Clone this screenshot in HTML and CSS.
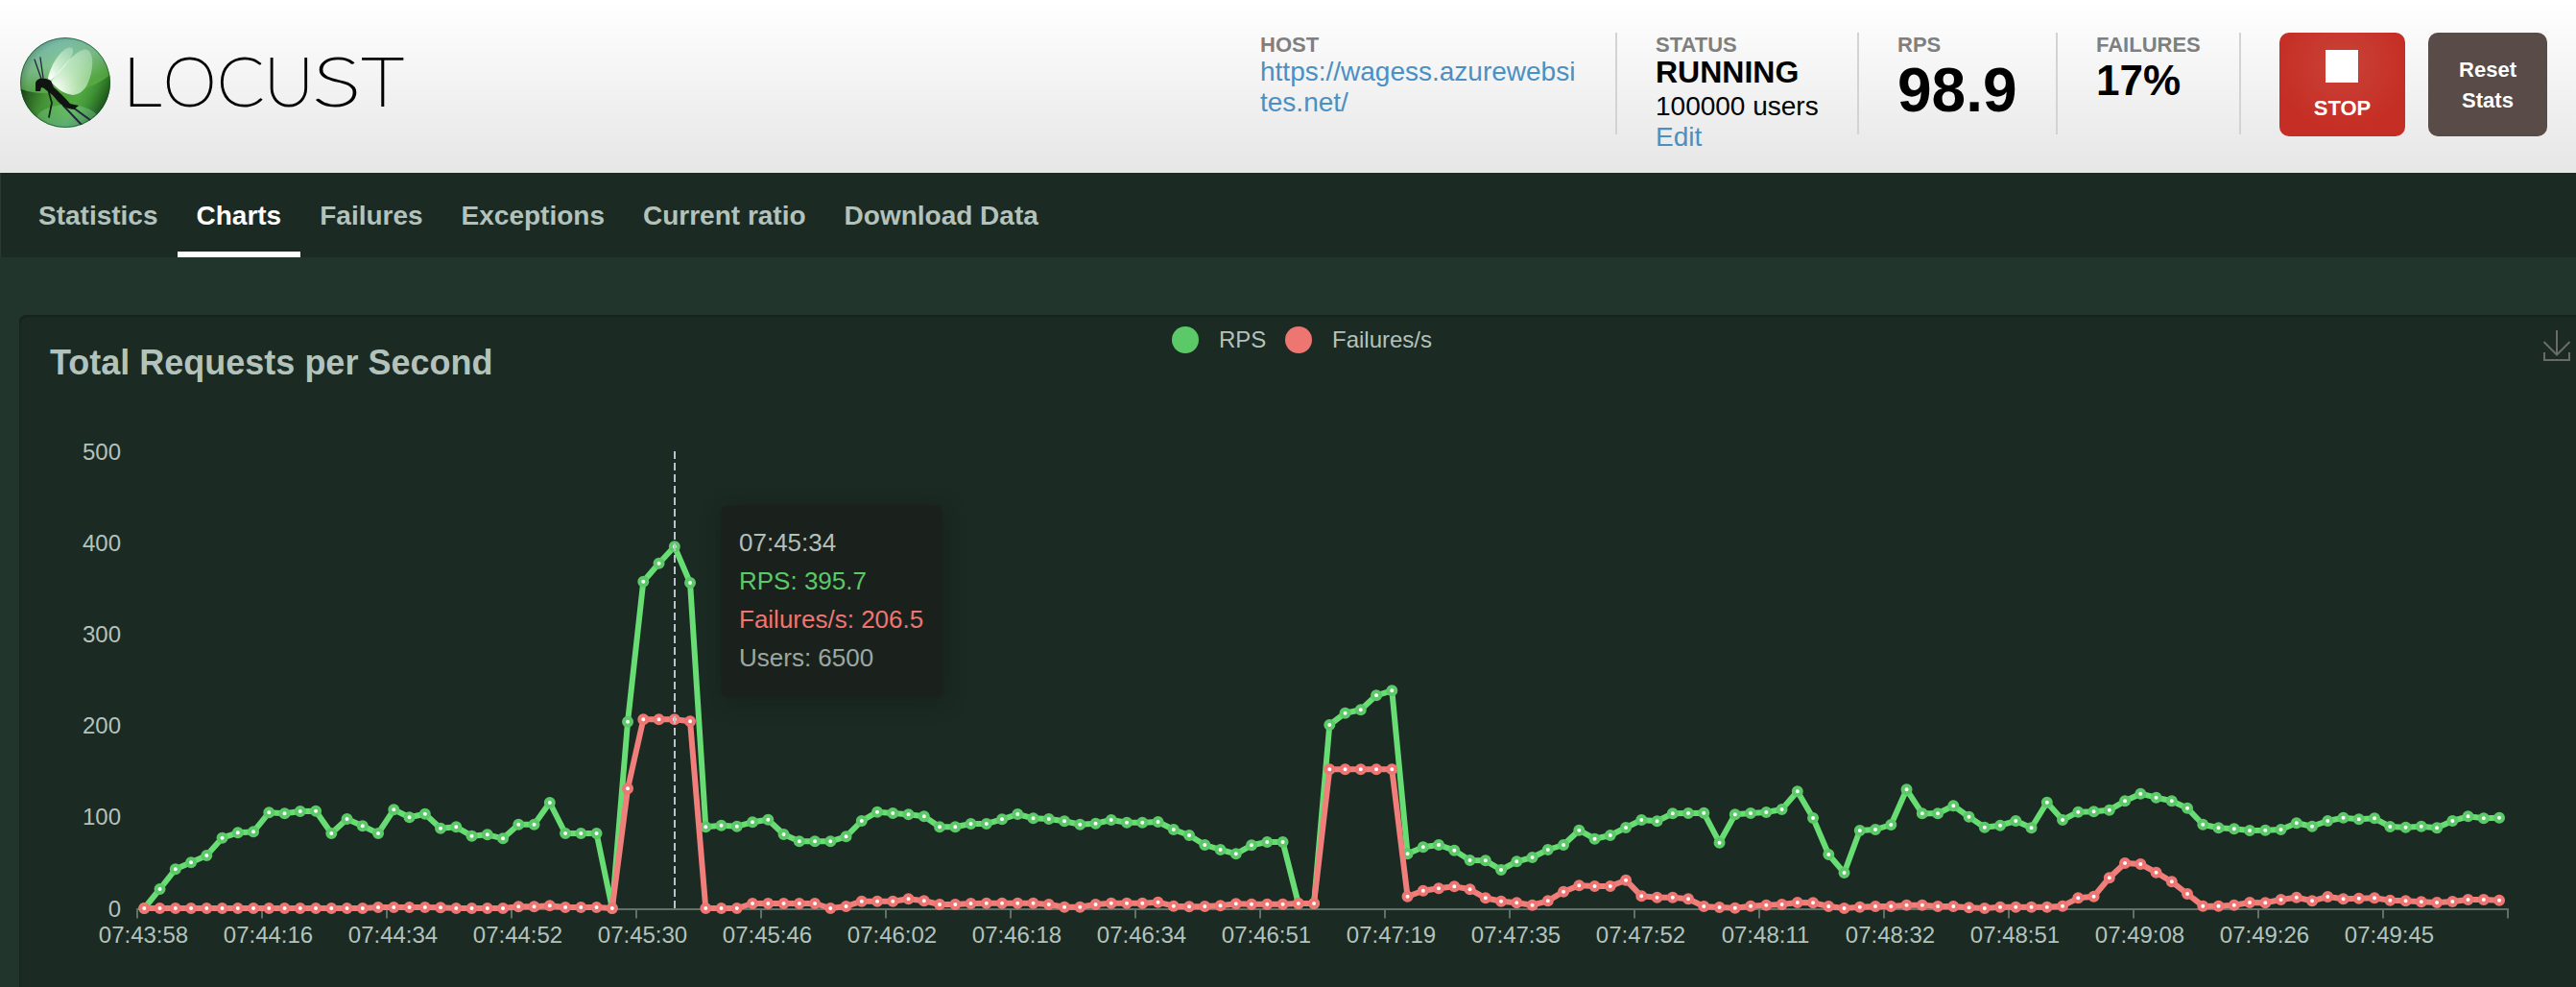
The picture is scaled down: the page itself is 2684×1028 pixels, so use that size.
FILE: index.html
```html
<!DOCTYPE html>
<html lang="en">
<head>
<meta charset="utf-8">
<title>Locust</title>
<link rel="stylesheet" href="styles.css">
</head>
<body>
<header class="top">
  <svg class="logo" width="420" height="130" viewBox="0 0 420 130" role="img" aria-label="Locust">
    <defs>
      <linearGradient id="ball" x1="0.3" y1="0" x2="0.6" y2="1">
        <stop offset="0" stop-color="#86cdc6"/><stop offset="0.3" stop-color="#82c48f"/>
        <stop offset="0.55" stop-color="#55a842"/><stop offset="0.8" stop-color="#56ae48"/><stop offset="1" stop-color="#5aaa90"/>
      </linearGradient>
      <radialGradient id="edge" cx="0.56" cy="0.52" r="0.56">
        <stop offset="0.5" stop-color="#062808" stop-opacity="0"/><stop offset="0.85" stop-color="#062808" stop-opacity="0.2"/><stop offset="1" stop-color="#062808" stop-opacity="0.6"/>
      </radialGradient>
      <linearGradient id="low" x1="0" y1="0" x2="1" y2="0.3">
        <stop offset="0" stop-color="#021404" stop-opacity="0.95"/><stop offset="0.38" stop-color="#1c5a16" stop-opacity="0.25"/>
        <stop offset="0.7" stop-color="#2a8a20" stop-opacity="0.1"/><stop offset="1" stop-color="#0b3a0a" stop-opacity="0.75"/>
      </linearGradient>
      <radialGradient id="wing" cx="0.1" cy="0.9" r="1.1">
        <stop offset="0" stop-color="#fff" stop-opacity="1"/><stop offset="0.5" stop-color="#eaffea" stop-opacity="0.65"/><stop offset="1" stop-color="#d8f5da" stop-opacity="0.4"/>
      </radialGradient>
      <clipPath id="disc"><circle cx="68" cy="86" r="47"/></clipPath>
    </defs>
    <g clip-path="url(#disc)">
      <circle cx="68" cy="86" r="47" fill="url(#ball)"/>
      <path d="M20 92Q34 98 55 97Q92 97 116 77V134H20Z" fill="url(#low)"/>
      <ellipse cx="70" cy="124" rx="32" ry="15" fill="#7fd08a" opacity="0.45"/>
      <circle cx="68" cy="86" r="47" fill="url(#edge)" opacity="0.5"/>
      <path d="M50 82C52 70 62 52 72 49.500C78 49 77 56 72 63C66 72 58 79 53 84Z" fill="url(#wing)"/>
      <path d="M53 85C62 74 76 54 88 51.500C96 51 98 64 95 76C92 90 86 98 76 99C66 98 58 91 53 85Z" fill="url(#wing)"/>
      <g fill="none" stroke="#24263c" stroke-width="1.300" stroke-linecap="round">
        <path d="M43 82L36 62M45 81L42 60"/>
        <path d="M50 93L54 107L51 122" stroke="#101c12" stroke-width="1.700"/>
        <path d="M66 110L85 130M72 109L94 125" stroke-width="2"/>
      </g>
      <path d="M37 95V86C39 81 45 80 53 84L56 91C62 96 68 102 73 108L82 110L77 114C68 113 63 109 59 104C55 98 49 95 46 92L43 91L42 95Z" fill="#101512"/>
    </g>
    <circle cx="68" cy="86" r="46.500" fill="none" stroke="#14502c" stroke-opacity="0.65"/>
    <g class="wordmark">
      <text transform="translate(127.500 110) scale(1.120 0.970)">L</text>
      <text transform="translate(170 110) scale(0.980 0.970)">O</text>
      <text transform="translate(226 110) scale(1 0.970)">C</text>
      <text transform="translate(275 110) scale(1 0.970)">U</text>
      <text transform="translate(325.500 110) scale(1.330 0.970)">S</text>
      <text transform="translate(377 110) scale(1.060 0.970)">T</text>
    </g>
  </svg>
  <div class="boxes">
    <div class="box host"><div class="label">HOST</div><a class="url">https://wagess.azurewebsi<br>tes.net/</a></div>
    <div class="box status"><div class="label">STATUS</div><div class="state">RUNNING</div><div class="users">100000 users</div><a class="edit">Edit</a></div>
    <div class="box rps"><div class="label">RPS</div><div class="rate">98.9</div></div>
    <div class="box fail"><div class="label">FAILURES</div><div class="ratio">17%</div></div>
    <div class="button stop"><span class="square"></span><span>STOP</span></div>
    <div class="button reset"><span>Reset</span><span>Stats</span></div>
  </div>
</header>
<nav class="tabs">
  <a class="tab">Statistics</a><a class="tab current">Charts</a><a class="tab">Failures</a><a class="tab">Exceptions</a><a class="tab">Current ratio</a><a class="tab">Download Data</a>
</nav>
<main class="card">
  <div class="card-head">
    <h2 class="title">Total Requests per Second</h2>
    <div class="legend"><span class="dot green"></span><span class="name first">RPS</span><span class="dot red"></span><span class="name">Failures/s</span></div>
    <svg class="save" width="30" height="34" viewBox="0 0 30 34"><path d="M15 1V26M1.500 13L15 26.500L28.500 13M2 24V32H28V24" fill="none" stroke="#6a6a68" stroke-width="2"/></svg>
  </div>
  <div class="plot">
    <svg id="chart" width="2660" height="588" viewBox="20 440 2660 588"></svg>
    <div class="tooltip"><div>07:45:34</div><div class="t-green">RPS: 395.7</div><div class="t-red">Failures/s: 206.5</div><div class="t-users">Users: 6500</div></div>
  </div>
</main>
<script src="chart.js"></script>
</body>
</html>
```
FILE: styles.css
```css
* { box-sizing: border-box; }
body {
  margin: 0;
  height: 1028px;
  overflow: hidden;
  background: #21352d;
  font-family: "Liberation Sans", Arial, sans-serif;
}
.top {
  height: 180px;
  display: flex;
  justify-content: space-between;
  background: linear-gradient(#ffffff, #e6e6e6);
}
.logo { display: block; overflow: visible; flex: none; }
.wordmark {
  font-family: Lato, sans-serif;
  font-weight: 200;
  font-size: 72px;
  fill: #000;
  stroke: #000;
  stroke-width: 2px;
}
.boxes { display: flex; padding: 34px 30px 0 0; }
.box {
  height: 106px;
  border-right: 2px solid #d3d3d3;
  margin-right: 40px;
  font-size: 28px;
  line-height: 32px;
  white-space: nowrap;
}
.host { width: 372px; }
.status { width: 212px; }
.rps { width: 167px; }
.fail { width: 151px; }
.label { height: 24px; line-height: 25px; font-size: 22px; font-weight: bold; color: #7f7f7f; }
.url, .edit { display: block; color: #4b8fc3; }
.url { padding-top: 1px; }
.state { font-size: 32px; font-weight: bold; line-height: 34px; height: 35px; }
.users { height: 34px; line-height: 35px; }
.rate { font-size: 64px; font-weight: bold; line-height: 72px; }
.ratio { font-size: 44px; font-weight: bold; line-height: 51px; }
.button {
  height: 108px;
  display: flex;
  flex-direction: column;
  align-items: center;
  border-radius: 10px;
  color: #fff;
  font-size: 22px;
  font-weight: bold;
  line-height: 32px;
}
.stop { width: 131px; padding-top: 18px; background: radial-gradient(circle at 50% 30%, #ca4238, #c52e24 70%); }
.square { width: 34px; height: 34px; margin: 0 1px 11px 0; background: #fff; }
.reset { width: 124px; margin-left: 24px; padding-top: 23px; background: #584b48; }
.tabs {
  height: 88px;
  display: flex;
  padding-left: 19px;
  background: #1b2a23;
  border-left: 1px solid #2a3a33;
}
.tab {
  height: 88px;
  padding: 0 20px;
  font-size: 28px;
  font-weight: bold;
  line-height: 89px;
  color: #b3c3bc;
}
.tab.current { color: #fff; border-bottom: 6px solid #fff; }
.card {
  width: 2680px;
  height: 720px;
  margin: 60px 0 0 20px;
  background: #1b2a23;
  border-radius: 8px;
  box-shadow: inset 1px 2px 1px #17231e;
}
.card-head {
  height: 112px;
  display: grid;
  grid-template-columns: 1201px 1fr 46px;
}
.title { margin: 29px 0 0 32px; font-size: 36px; line-height: 42px; color: #b3c3bc; }
.legend { display: flex; align-items: center; height: 28px; margin-top: 12px; font-size: 24px; color: #b3c3bc; }
.dot { width: 28px; height: 28px; border-radius: 50%; }
.dot.green { background: #5bc967; }
.dot.red { background: #ee7672; }
.name { margin-left: 21px; }
.first { width: 69px; }
.save { margin-top: 15px; margin-left: -5px; }
.plot { position: relative; }
#chart { display: block; }
.axis-text { font-size: 24px; fill: #b3c3bc; }
.tooltip {
  position: absolute;
  left: 731px;
  top: 86px;
  width: 231px;
  height: 200px;
  padding: 19px;
  border-radius: 8px;
  background: #1a211d;
  box-shadow: 2px 4px 20px rgba(20, 28, 24, 0.6);
  font-size: 26px;
  line-height: 40px;
  white-space: nowrap;
  color: #b3c0ba;
}
.t-green { color: #5bc967; }
.t-red { color: #ee7672; }
.t-users { color: #9ca8a2; }
```
FILE: chart.js
```js
// Sample heights above the baseline, in thirds of a pixel (2.856 per request/s).
const rps = [0,60,122,143,165,220,236,239,299,296,303,304,234,279,257,234,308,284,295,250,254,226,230,218,262,262,330,234,234,234,0,
  583,1021,1078,1130,1017,254,259,256,269,277,231,209,209,209,224,273,301,297,293,287,254,254,
  264,264,278,294,281,279,272,262,265,276,268,268,270,246,228,198,183,170,197,207,207,15,15,
  573,610,620,665,680,170,191,198,181,150,149,120,146,159,183,198,244,217,228,252,276,272,296,297,298,205,293,297,300,309,365,
  282,168,111,243,246,261,371,296,296,320,286,253,259,273,251,331,276,301,302,307,335,358,346,335,313,
  262,251,248,243,244,246,266,256,273,283,278,281,255,253,256,251,273,287,281,283];
const failures = [0,0,0,0,0,0,0,0,0,0,0,0,0,0,0,3,3,3,3,2,0,0,0,0,5,5,8,3,3,3,0,
  374,590,590,590,584,0,0,0,15,15,15,15,15,0,6,22,22,22,29,23,12,12,
  15,16,16,16,16,12,4,4,12,16,16,16,19,7,5,6,8,14,13,13,13,15,15,
  434,434,434,434,434,37,55,62,68,59,32,22,17,10,23,52,71,69,69,88,38,34,34,29,6,3,1,7,10,12,18,
  17,6,0,4,6,6,10,10,6,6,2,0,4,4,4,4,7,32,37,95,141,138,112,83,45,
  7,7,10,18,17,27,34,23,36,29,31,32,25,23,20,18,21,27,27,25];
const times = ['07:43:58','07:44:16','07:44:34','07:44:52','07:45:30','07:45:46','07:46:02','07:46:18','07:46:34','07:46:51',
  '07:47:19','07:47:35','07:47:52','07:48:11','07:48:32','07:48:51','07:49:08','07:49:26','07:49:45'];

const left = 150.3, step = 16.25, base = 946;
const px = i => left + i * step;
const py = h => base - h / 3;

let out = '';
for (let v = 0; v <= 5; v++) {
  out += `<text class="axis-text" text-anchor="end" x="126" y="${base - v * 95.2 + 8.5}">${v * 100}</text>`;
}
out += '<path d="M142 947H2614" stroke="#61716a" stroke-width="2"/>';
for (let i = 0; i < 20; i++) {
  out += `<path d="M${143 + i * 130} 946V956.500" stroke="#61716a" stroke-width="2"/>`;
}
times.forEach((t, i) => {
  out += `<text class="axis-text" text-anchor="middle" x="${px(i * 8) - 0.8}" y="982">${t}</text>`;
});

function series(data, line, ring) {
  const points = data.map((h, i) => `${px(i)},${py(h).toFixed(1)}`).join(' ');
  let s = `<polyline points="${points}" fill="none" stroke="${line}" stroke-width="6" stroke-linejoin="bevel"/>`;
  data.forEach((h, i) => {
    s += `<circle cx="${px(i)}" cy="${py(h).toFixed(1)}" r="4" fill="#fff" stroke="${ring}" stroke-width="4"/>`;
  });
  return s;
}
out += series(rps, '#67dd73', '#5bc967');
out += series(failures, '#f07f7b', '#ee7672');
out += '<path d="M703 470V946" stroke="#b9c3cb" stroke-width="2" stroke-dasharray="8 4"/>';
document.getElementById('chart').innerHTML = out;
```
